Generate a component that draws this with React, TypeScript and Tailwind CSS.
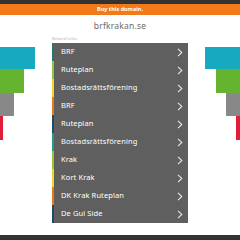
import React from "react";

const links = [
  { label: "BRF", color: "#237a6b" },
  { label: "Ruteplan", color: "#8cc63e" },
  { label: "Bostadsrättsförening", color: "#f0d42c" },
  { label: "BRF", color: "#e8791f" },
  { label: "Ruteplan", color: "#1d4d66" },
  { label: "Bostadsrättsförening", color: "#239c82" },
  { label: "Krak", color: "#9cc43a" },
  { label: "Kort Krak", color: "#f0d42c" },
  { label: "DK Krak Ruteplan", color: "#e8791f" },
  { label: "De Gul Side", color: "#1d4d66" },
];

const Chevron = () => (
  <svg width="6" height="9" viewBox="0 0 6 9" fill="none">
    <path d="M1 0.8 L4.8 4.5 L1 8.2" stroke="#e5e5e5" strokeWidth="1.1" />
  </svg>
);

export default function App() {
  return (
    <div
      className="w-[240px] h-[240px] bg-white flex flex-col overflow-hidden"
      style={{ fontFamily: '"Noto Sans", "Liberation Sans", sans-serif' }}
    >
      {/* top strips */}
      <div className="h-[4px] bg-[#333333]" />
      <div className="h-[11px] bg-[#f27a1a] flex items-center justify-center">
        <span className="text-[5.5px] font-bold text-white leading-none">Buy this domain.</span>
      </div>

      {/* body */}
      <div className="flex-1 flex">
        {/* left decor */}
        <div className="w-[52px] flex flex-col pt-[32px]">
          <div className="h-[22px] w-[35px] bg-[#16a9bf]" />
          <div className="h-[24px] w-[24px] bg-[#65b32e]" />
          <div className="h-[23px] w-[14px] bg-[#888888]" />
          <div className="h-[24px] w-[3px] bg-[#e01e3c]" />
        </div>

        {/* center */}
        <div className="w-[136px] flex flex-col">
          <div className="h-[22px] flex items-center justify-center text-[8.5px] text-[#6a6a6a] tracking-[0.2px]">
            brfkrakan.se
          </div>
          <div className="h-[6px] text-[4px] leading-none text-[#b5b5b5]">Related Links</div>
          <ul className="flex flex-col bg-[#5f5f5f]">
            {links.map((l, i) => (
              <li
                key={i}
                className="h-[18px] flex items-center border-l-2 pl-[7px] pr-[5px] justify-between"
                style={{ borderColor: l.color }}
              >
                <span className="text-[7.5px] text-white leading-none tracking-[0.1px]">{l.label}</span>
                <Chevron />
              </li>
            ))}
          </ul>
        </div>

        {/* right decor */}
        <div className="w-[52px] flex flex-col items-end pt-[32px]">
          <div className="h-[22px] w-[35px] bg-[#16a9bf]" />
          <div className="h-[24px] w-[24px] bg-[#65b32e]" />
          <div className="h-[23px] w-[14px] bg-[#888888]" />
          <div className="h-[24px] w-[4px] bg-[#e01e3c]" />
        </div>
      </div>

      <div className="h-[5px] bg-[#333333]" />
    </div>
  );
}
